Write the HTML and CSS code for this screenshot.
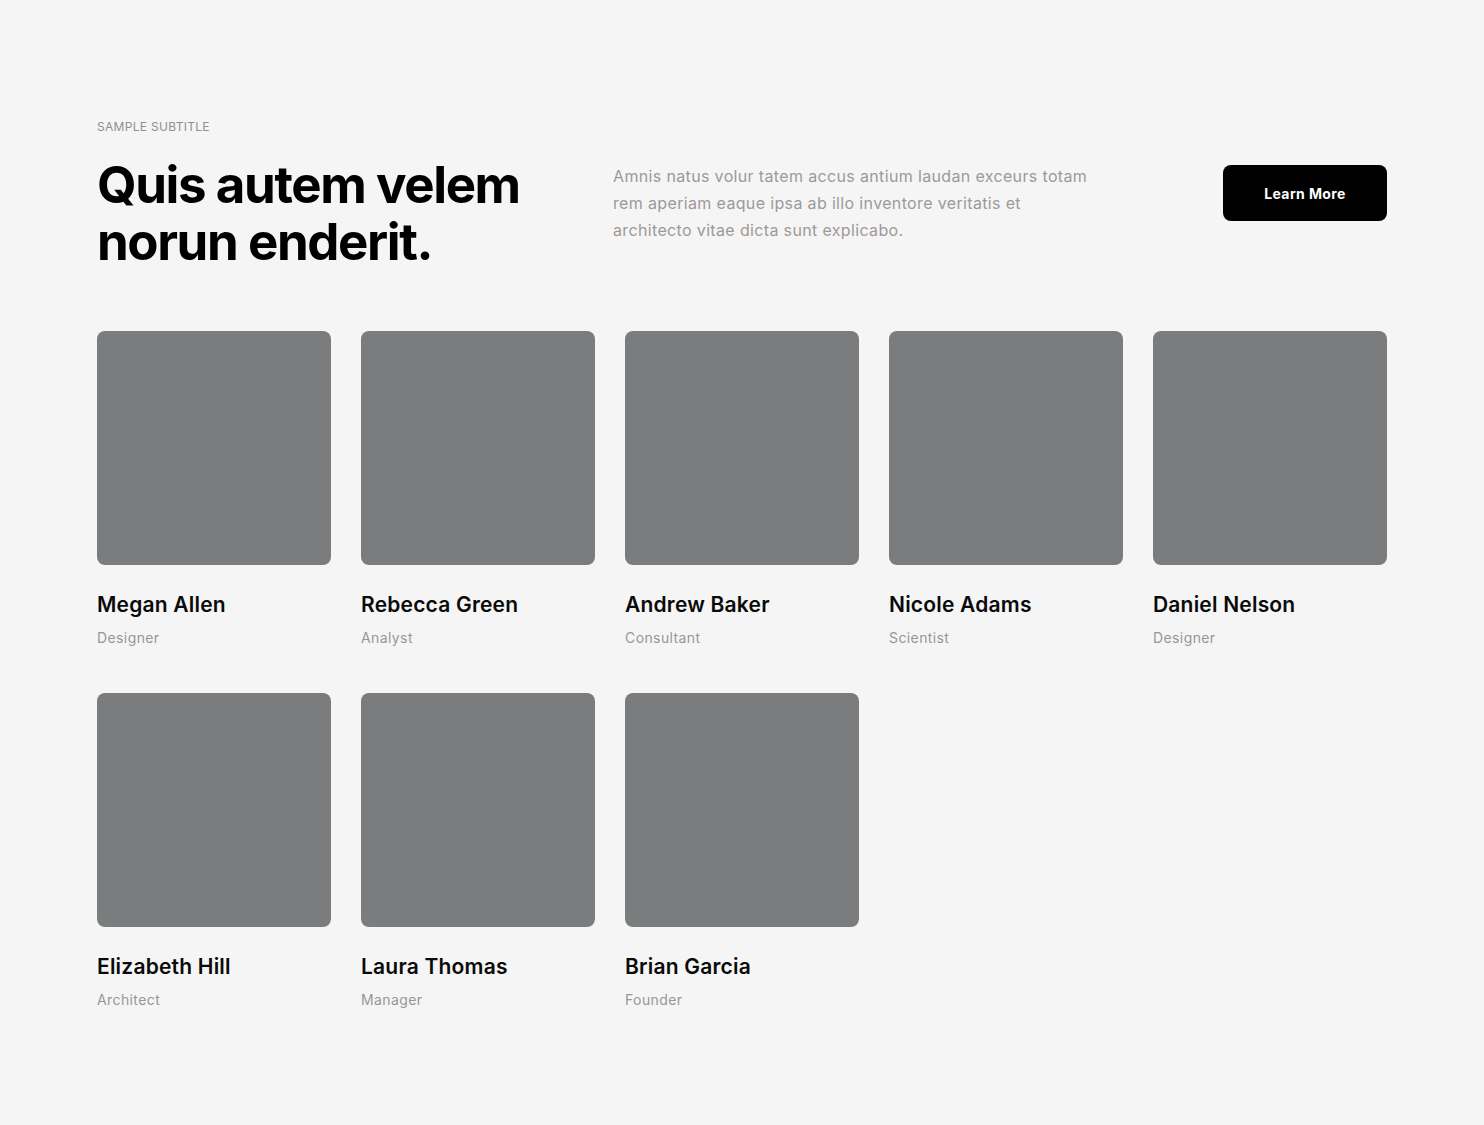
FILE: index.html
```html
<!DOCTYPE html>
<html lang="en">
<head>
<meta charset="utf-8">
<title>Team</title>
<link rel="stylesheet" href="styles.css">
</head>
<body>
<section class="team">
  <div class="container">
    <div class="header">
      <div class="header-left">
        <div class="subtitle">SAMPLE SUBTITLE</div>
        <h1 class="title">Quis autem velem norun enderit.</h1>
      </div>
      <p class="lead">Amnis natus volur tatem accus antium laudan exceurs totam rem aperiam eaque ipsa ab illo inventore veritatis et architecto vitae dicta sunt explicabo.</p>
      <a class="btn" href="#">Learn More</a>
    </div>
    <div class="grid">
      <div class="member"><div class="photo"></div><div class="name">Megan Allen</div><div class="role">Designer</div></div>
      <div class="member"><div class="photo"></div><div class="name">Rebecca Green</div><div class="role">Analyst</div></div>
      <div class="member"><div class="photo"></div><div class="name">Andrew Baker</div><div class="role">Consultant</div></div>
      <div class="member"><div class="photo"></div><div class="name">Nicole Adams</div><div class="role">Scientist</div></div>
      <div class="member"><div class="photo"></div><div class="name">Daniel Nelson</div><div class="role">Designer</div></div>
      <div class="member"><div class="photo"></div><div class="name">Elizabeth Hill</div><div class="role">Architect</div></div>
      <div class="member"><div class="photo"></div><div class="name">Laura Thomas</div><div class="role">Manager</div></div>
      <div class="member"><div class="photo"></div><div class="name">Brian Garcia</div><div class="role">Founder</div></div>
    </div>
  </div>
</section>
</body>
</html>
```
FILE: styles.css
```css
* { box-sizing: border-box; }
html, body { margin: 0; padding: 0; }
body {
  background: #f5f5f5;
  font-family: Inter, "Noto Sans", "Liberation Sans", sans-serif;
  color: #000;
}
.team { padding: 119px 0 100px; }
.container { width: 1290px; margin: 0 auto; }
.header { display: flex; align-items: flex-start; }
.header-left { width: 486px; margin-right: 30px; }
.subtitle {
  font-size: 12px;
  line-height: 16px;
  color: #8f8f8f;
  letter-spacing: 0.3px;
}
.title {
  margin: 21px 0 0;
  font-size: 51px;
  line-height: 57px;
  font-weight: 700;
  letter-spacing: -1.4px;
}
.lead {
  margin: 44px 0 0;
  width: 482px;
  font-size: 16px;
  line-height: 27px;
  color: #9d9999;
  letter-spacing: 0.35px;
}
.btn {
  margin-left: auto;
  margin-top: 46px;
  width: 164px;
  height: 56px;
  border-radius: 8px;
  background: #000;
  color: #fff;
  text-decoration: none;
  font-size: 14px;
  font-weight: 700;
  letter-spacing: 0.4px;
  display: flex;
  align-items: center;
  justify-content: center;
}
.grid {
  margin-top: 61px;
  display: grid;
  grid-template-columns: repeat(5, 234px);
  column-gap: 30px;
  row-gap: 44px;
}
.photo {
  width: 234px;
  height: 234px;
  border-radius: 8px;
  background: #7b7c7d;
}
.name {
  margin-top: 26px;
  font-size: 21px;
  line-height: 28px;
  font-weight: 600;
  letter-spacing: 0.2px;
  color: #0a0a0a;
}
.role {
  margin-top: 8px;
  font-size: 14px;
  line-height: 22px;
  color: #9a9696;
  letter-spacing: 0.4px;
}
```
